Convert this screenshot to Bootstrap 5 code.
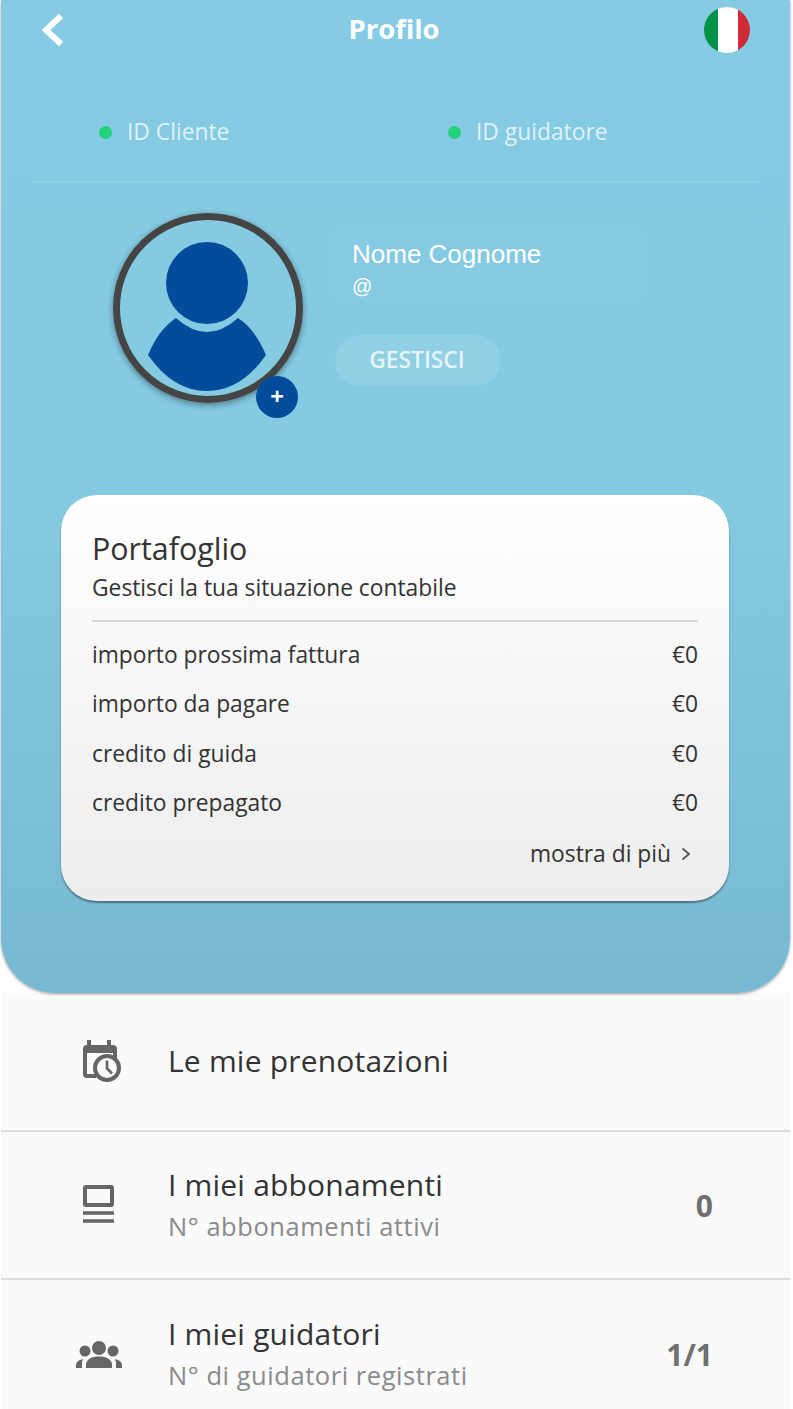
<!DOCTYPE html>
<html lang="it">
<head>
  <meta charset="UTF-8">
  <title>Profilo</title>
  <link rel="stylesheet" href="https://cdn.jsdelivr.net/npm/bootstrap@5.3.3/dist/css/bootstrap.min.css">
  <script src="https://cdn.jsdelivr.net/npm/bootstrap@5.3.3/dist/js/bootstrap.bundle.min.js"></script>
  <style>
    html, body { height: 1409px; overflow: hidden; }
    body { background: #fff; font-family: "Open Sans", sans-serif; color: #333; }
    .schermo { width: 789px; margin-left: 1px; }
    .pannello {
      height: 993px;
      background: linear-gradient(180deg, #84cbe3 0%, #84cae1 50%, #78b9d1 100%);
      border-radius: 0 0 54px 54px;
      box-shadow: 0 1px 3px rgba(0,0,0,.4);
      position: relative;
      z-index: 1;
    }
    .testata { height: 60px; padding: 0 40px; }
    .indietro { width: 43px; }
    .titolo { font-size: 27.5px; font-weight: 700; color: #fff; margin-bottom: 2px; }
    .bandiera { width: 46px; height: 46px; border-radius: 50%; overflow: hidden; flex: none; }
    .verde { width: 14px; background: #009246; }
    .bianco { width: 20px; background: #fff; }
    .rosso { width: 12px; background: #ce2b37; }
    .riga-id { height: 122px; margin: 0 32px 0 31px; padding: 0 0 0 67px; border-bottom: 1px solid rgba(255,255,255,.18); }
    .voce-id { flex: none; width: 349px; height: 24px; margin-top: 60px; font-size: 22.8px; color: rgba(255,255,255,.75); gap: 15px; }
    .pallino { width: 13px; height: 13px; border-radius: 50%; background: #22d37c; flex: none; }
    .profilo { padding: 31px 0 0 112px; height: 313px; }
    .avatar { width: 190px; height: 190px; border: 7px solid #454545; border-radius: 50%; box-shadow: 0 2px 6px rgba(0,0,0,.4); position: relative; flex: none; }
    .avatar svg { display: block; width: 176px; height: 176px; }
    .piu { position: absolute; right: -2px; bottom: -22px; width: 42px; height: 42px; border-radius: 50%; background: #024c9b; color: #fff; font-size: 24px; font-weight: 700; line-height: 40px; text-align: center; }
    .dati { margin-left: 22px; width: 327px; }
    .nome-box { height: 75px; margin-top: 15px; padding: 10px 0 0 27px; background: rgba(255,255,255,.015); border-radius: 16px; color: #fff; font-family: "Liberation Sans", sans-serif; }
    .nome { font-size: 26px; line-height: 32px; }
    .chiocciola { font-size: 20px; line-height: 33px; }
    .gestisci { width: 166px; height: 51px; margin: 32px 0 0 10px; border: 0; border-radius: 26px; background: rgba(255,255,255,.1); color: rgba(255,255,255,.8); font-size: 22.8px; font-weight: 600; padding: 0 2px 0 0; }
    .portafoglio { width: 668px; height: 406px; margin-left: 60px; border: 0; border-radius: 36px; background: linear-gradient(180deg, #fff 0%, #ededed 100%); box-shadow: 0 2px 2px rgba(0,0,0,.4); padding: 32px 31px 0 31px; color: #333; }
    .portafoglio h2 { font-size: 30.4px; font-weight: 400; line-height: 44px; margin: 0; }
    .portafoglio p { font-size: 22.8px; line-height: 34px; margin: 0 0 8px; padding-bottom: 15px; border-bottom: 2px solid #d8d8d8; }
    .importo { font-size: 22.8px; height: 49.5px; }
    .mostra { font-size: 22.8px; height: 49px; padding: 3px 7px 0 0; }
    .mostra svg { margin-left: 10px; }
    .elenco { background: #fafafa; height: 416px; }
    .voce { height: 148px; border-bottom: 2px solid #dcdcdc; padding: 0 77px 0 75px; }
    .voce:first-child { height: 139px; }
    .voce:first-child h3 { margin-bottom: 2px; }
    .voce:last-child { border-bottom: 0; }
    .icona { width: 48px; flex: none; margin-right: 44px; display: block; }
    .voce h3 { font-size: 30px; font-weight: 400; line-height: 40px; margin: 0; color: #333; letter-spacing: .2px; }
    .voce small { display: block; margin-top: 2px; font-size: 25.5px; line-height: 38px; color: #8a8a8a; letter-spacing: .55px; }
    .conteggio { margin-left: auto; font-size: 30px; font-weight: 700; color: #6f6f6f; }
  </style>
</head>
<body>
  <div class="schermo">
    <div class="pannello">
      <div class="testata d-flex align-items-center justify-content-between">
        <div class="indietro">
          <svg class="d-block" width="24" height="34" viewBox="0 0 24 34"><path d="M20 3 5 17l15 14" fill="none" stroke="#fff" stroke-width="6"/></svg>
        </div>
        <span class="titolo">Profilo</span>
        <div class="bandiera d-flex">
          <span class="verde"></span><span class="bianco"></span><span class="rosso"></span>
        </div>
      </div>
      <div class="riga-id d-flex">
        <div class="voce-id d-flex align-items-center"><i class="pallino"></i>ID Cliente</div>
        <div class="voce-id d-flex align-items-center"><i class="pallino"></i>ID guidatore</div>
      </div>
      <div class="profilo d-flex">
        <div class="avatar">
          <svg viewBox="1 1 176 176">
            <circle cx="88" cy="64" r="41" fill="#024c9b"/>
            <path d="M57 99Q88 127 119 99Q136 110 147 136Q122 172 88 172Q54 172 29 136Q40 110 57 99z" fill="#024c9b"/>
          </svg>
          <span class="piu">+</span>
        </div>
        <div class="dati">
          <div class="nome-box">
            <div class="nome">Nome Cognome</div>
            <div class="chiocciola">@</div>
          </div>
          <button class="gestisci btn d-block">GESTISCI</button>
        </div>
      </div>
      <div class="portafoglio card">
        <h2>Portafoglio</h2>
        <p>Gestisci la tua situazione contabile</p>
        <div class="importo d-flex justify-content-between align-items-center"><span>importo prossima fattura</span><span>€0</span></div>
        <div class="importo d-flex justify-content-between align-items-center"><span>importo da pagare</span><span>€0</span></div>
        <div class="importo d-flex justify-content-between align-items-center"><span>credito di guida</span><span>€0</span></div>
        <div class="importo d-flex justify-content-between align-items-center"><span>credito prepagato</span><span>€0</span></div>
        <div class="mostra d-flex justify-content-end align-items-center">mostra di più
          <svg width="10" height="14" viewBox="0 0 10 14"><path d="M1.500 1.500 8 7l-6.500 5.500" fill="none" stroke="#555" stroke-width="1.800"/></svg>
        </div>
      </div>
    </div>
    <div class="elenco">
      <div class="voce d-flex align-items-center">
        <svg class="icona" width="48" height="48" viewBox="0 0 48 48">
          <path d="M11 2h4v5h16V2h4v5h2a4 4 0 0 1 4 4v12h-4v-8H11v21h9v4h-9a4 4 0 0 1-4-4V11a4 4 0 0 1 4-4z" fill="#666"/>
          <circle cx="31" cy="30" r="12" fill="#fafafa" stroke="#666" stroke-width="4"/>
          <path d="M31 22.500v8l5 5" fill="none" stroke="#666" stroke-width="2.600"/>
        </svg>
        <div><h3>Le mie prenotazioni</h3></div>
      </div>
      <div class="voce d-flex align-items-center">
        <svg class="icona" width="48" height="48" viewBox="0 0 48 48">
          <rect x="9" y="6" width="27" height="18" rx="1" fill="none" stroke="#666" stroke-width="4"/>
          <path d="M7 32h31M7 40h31" stroke="#666" stroke-width="3.400"/>
        </svg>
        <div><h3>I miei abbonamenti</h3><small>N° abbonamenti attivi</small></div>
        <span class="conteggio">0</span>
      </div>
      <div class="voce d-flex align-items-center">
        <svg class="icona" width="48" height="48" viewBox="0 0 48 48">
          <circle cx="23" cy="18" r="7" fill="#666"/>
          <circle cx="9" cy="21" r="5.500" fill="#666"/>
          <circle cx="37" cy="21" r="5.500" fill="#666"/>
          <path d="M10 38v-3c0-6 6-8.500 13-8.500s13 2.500 13 8.500v3z" fill="#666"/>
          <path d="M0 38v-2c0-4 2.500-6 7-7-.6 1.500-1 3-1 5v4zM46 38v-2c0-4-2.500-6-7-7 .6 1.500 1 3 1 5v4z" fill="#666"/>
        </svg>
        <div><h3>I miei guidatori</h3><small>N° di guidatori registrati</small></div>
        <span class="conteggio">1/1</span>
      </div>
    </div>
  </div>
</body>
</html>
